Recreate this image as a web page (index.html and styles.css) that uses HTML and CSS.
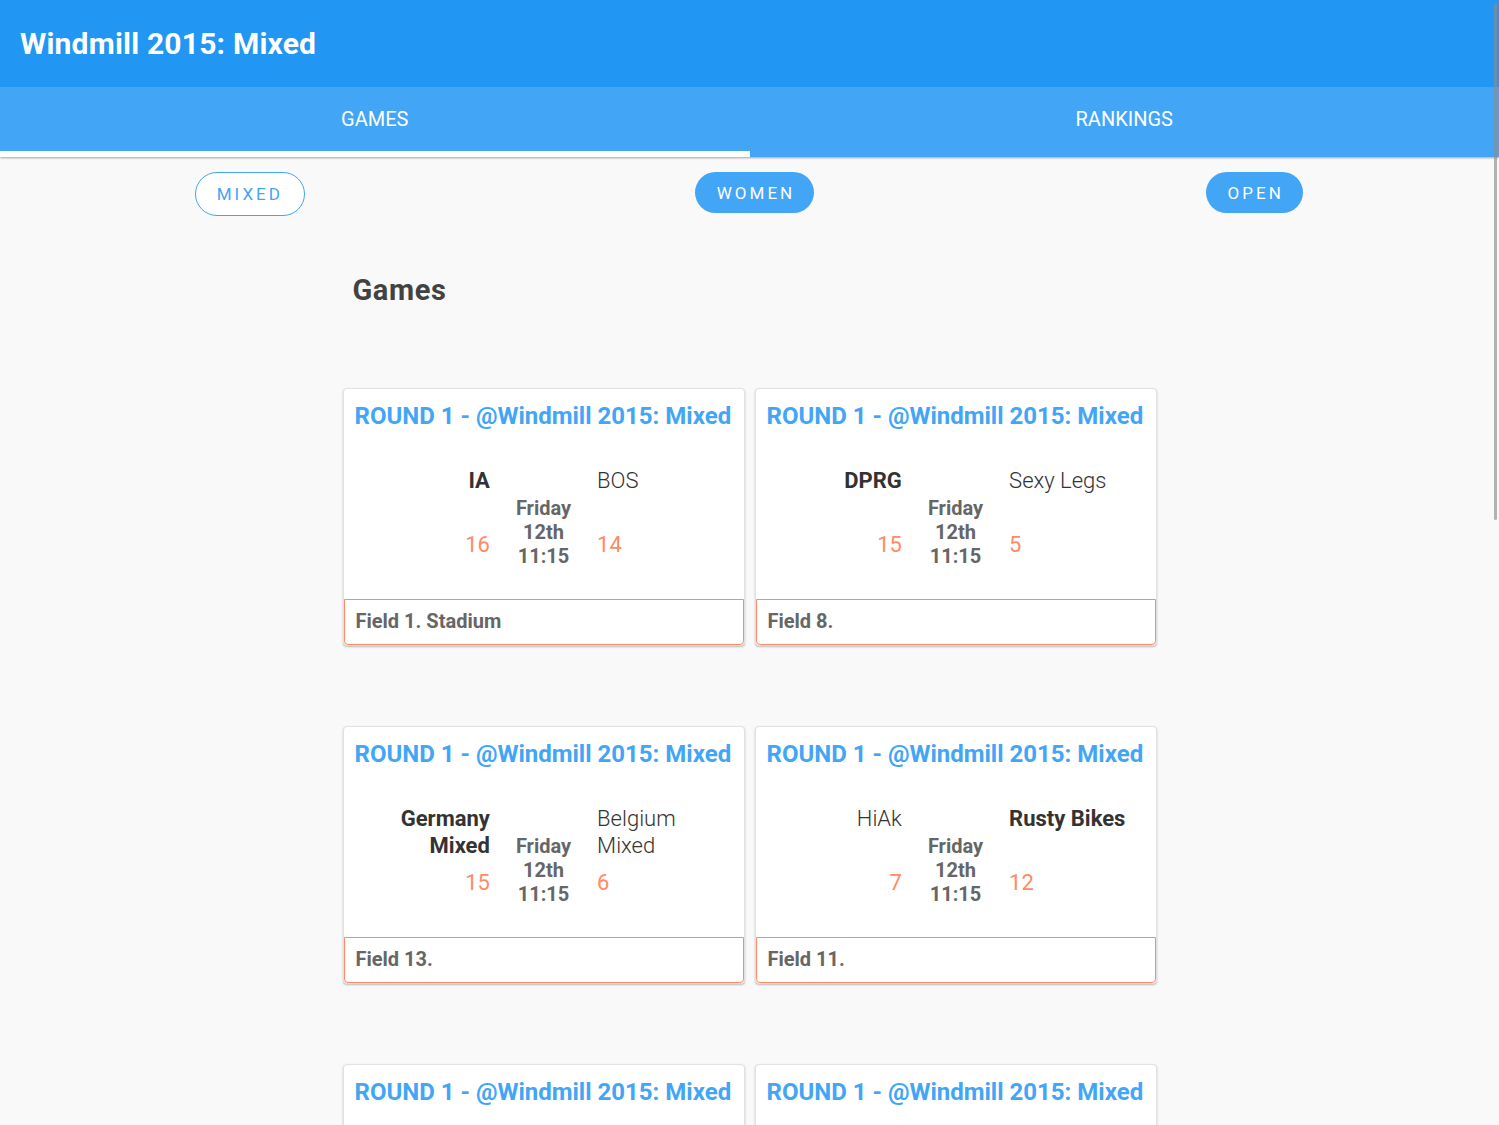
FILE: index.html
```html
<!DOCTYPE html>
<html>
<head>
<meta charset="utf-8">
<link rel="stylesheet" href="styles.css">
</head>
<body>
<header class="appbar">
  <div class="toolbar"><h1 class="app-title">Windmill 2015: Mixed</h1></div>
  <nav class="tabs">
    <div class="tab active">GAMES</div>
    <div class="tab">RANKINGS</div>
  </nav>
</header>
<div class="filters">
  <div class="filter-cell"><button class="pill outline">MIXED</button></div>
  <div class="filter-cell"><button class="pill filled">WOMEN</button></div>
  <div class="filter-cell"><button class="pill filled">OPEN</button></div>
</div>
<main class="content">
  <h2 class="section-title">Games</h2>
  <div class="grid">
    <div class="card">
      <div class="card-title">ROUND 1 - @Windmill 2015: Mixed</div>
      <div class="match">
        <div class="team left"><div class="name win">IA</div><div class="score">16</div></div>
        <div class="time">Friday<br>12th<br>11:15</div>
        <div class="team right"><div class="name">BOS</div><div class="score">14</div></div>
      </div>
      <div class="field">Field 1. Stadium</div>
    </div>
    <div class="card">
      <div class="card-title">ROUND 1 - @Windmill 2015: Mixed</div>
      <div class="match">
        <div class="team left"><div class="name win">DPRG</div><div class="score">15</div></div>
        <div class="time">Friday<br>12th<br>11:15</div>
        <div class="team right"><div class="name">Sexy Legs</div><div class="score">5</div></div>
      </div>
      <div class="field">Field 8.</div>
    </div>
    <div class="card">
      <div class="card-title">ROUND 1 - @Windmill 2015: Mixed</div>
      <div class="match">
        <div class="team left"><div class="name win">Germany Mixed</div><div class="score">15</div></div>
        <div class="time">Friday<br>12th<br>11:15</div>
        <div class="team right"><div class="name">Belgium Mixed</div><div class="score">6</div></div>
      </div>
      <div class="field">Field 13.</div>
    </div>
    <div class="card">
      <div class="card-title">ROUND 1 - @Windmill 2015: Mixed</div>
      <div class="match">
        <div class="team left"><div class="name">HiAk</div><div class="score">7</div></div>
        <div class="time">Friday<br>12th<br>11:15</div>
        <div class="team right"><div class="name win">Rusty Bikes</div><div class="score">12</div></div>
      </div>
      <div class="field">Field 11.</div>
    </div>
    <div class="card">
      <div class="card-title">ROUND 1 - @Windmill 2015: Mixed</div>
      <div class="match">
        <div class="team left"><div class="name win">&nbsp;</div><div class="score">&nbsp;</div></div>
        <div class="time">&nbsp;</div>
        <div class="team right"><div class="name">&nbsp;</div><div class="score">&nbsp;</div></div>
      </div>
      <div class="field">&nbsp;</div>
    </div>
    <div class="card">
      <div class="card-title">ROUND 1 - @Windmill 2015: Mixed</div>
      <div class="match">
        <div class="team left"><div class="name win">&nbsp;</div><div class="score">&nbsp;</div></div>
        <div class="time">&nbsp;</div>
        <div class="team right"><div class="name">&nbsp;</div><div class="score">&nbsp;</div></div>
      </div>
      <div class="field">&nbsp;</div>
    </div>
  </div>
</main>
<div class="scroll-thumb"></div>
</body>
</html>
```

FILE: styles.css
```css
html, body {
  margin: 0;
  padding: 0;
  height: 100%;
  overflow: hidden;
}
body {
  background: #f9f9f9;
  font-family: Roboto, "Liberation Sans", sans-serif;
  color: #333;
}
.appbar {
  background: #2196f3;
  box-shadow: 0 1px 2px rgba(0,0,0,0.35);
  position: relative;
  z-index: 1;
}
.toolbar {
  height: 87px;
  display: flex;
  align-items: center;
  padding: 0 20px;
}
.app-title {
  margin: 0;
  color: #fff;
  font-size: 30px;
  font-weight: 700;
  letter-spacing: 0.2px;
}
.tabs {
  display: flex;
  background: #42a5f5;
  height: 70px;
}
.tab {
  flex: 1;
  display: flex;
  align-items: center;
  justify-content: center;
  color: #fff;
  font-size: 20px;
  font-weight: 400;
  box-sizing: border-box;
  padding-bottom: 6px;
}
.tab.active {
  border-bottom: 6px solid #fff;
  padding-bottom: 0;
}
.filters {
  display: grid;
  grid-template-columns: 1fr 1fr 1fr;
  padding-top: 15px;
  align-items: start;
}
.filter-cell {
  display: flex;
  justify-content: center;
}
.pill {
  font-family: Roboto, "Liberation Sans", sans-serif;
  font-size: 17px;
  letter-spacing: 3px;
  border-radius: 22px;
  padding: 0 19px 0 22px;
  cursor: pointer;
}
.pill.outline {
  height: 44px;
  background: #fff;
  border: 1px solid #42a5f5;
  color: #42a5f5;
  width: 110px;
  padding: 0;
}
.pill.filled {
  height: 41px;
  background: #42a5f5;
  border: none;
  color: #fff;
}
.filters .filter-cell:nth-child(2) .pill,
.filters .filter-cell:nth-child(3) .pill { margin-left: 10px; }
.content {
  width: 814px;
  margin: 0 auto;
}
.section-title {
  margin: 57px 0 0 10px;
  font-size: 29px;
  font-weight: 700;
  letter-spacing: 0.6px;
  color: #424242;
  line-height: 34px;
}
.grid {
  margin-top: 81px;
  display: grid;
  grid-template-columns: 1fr 1fr;
  column-gap: 10px;
  row-gap: 80px;
}
.card {
  background: #fff;
  border: 1px solid #e2e2e2;
  border-radius: 4px;
  box-shadow: 0 1px 2px rgba(0,0,0,0.25);
}
.card-title {
  padding: 12px 11px 0;
  color: #42a5f5;
  font-size: 24px;
  font-weight: 700;
  line-height: 30px;
  white-space: nowrap;
}
.match {
  display: grid;
  grid-template-columns: 1fr auto 1fr;
  column-gap: 26px;
  padding: 0 12px;
  margin-top: 36px;
  height: 102px;
}
.team .name {
  font-size: 22px;
  line-height: 27px;
  min-height: 54px;
  color: #333;
  font-weight: 300;
}
.team .name.win { font-weight: 700; }
.team.left { text-align: right; }
.team.right { text-align: left; }
.score {
  font-size: 22px;
  line-height: 48px;
  color: #ff8a65;
}
.time {
  padding-top: 29px;
  text-align: center;
  font-size: 20px;
  font-weight: 700;
  line-height: 24px;
  color: #666;
}
.field {
  margin-top: 30px;
  border: 1px solid #ff8a65;
  border-radius: 0 0 4px 4px;
  padding: 0 11px;
  height: 44px;
  line-height: 43px;
  font-size: 20px;
  font-weight: 700;
  color: #666;
}
.scroll-thumb {
  position: fixed;
  top: 3px;
  right: 2px;
  width: 3px;
  height: 517px;
  background: rgba(140,140,140,0.65);
  border-radius: 2px;
  z-index: 5;
}
```
